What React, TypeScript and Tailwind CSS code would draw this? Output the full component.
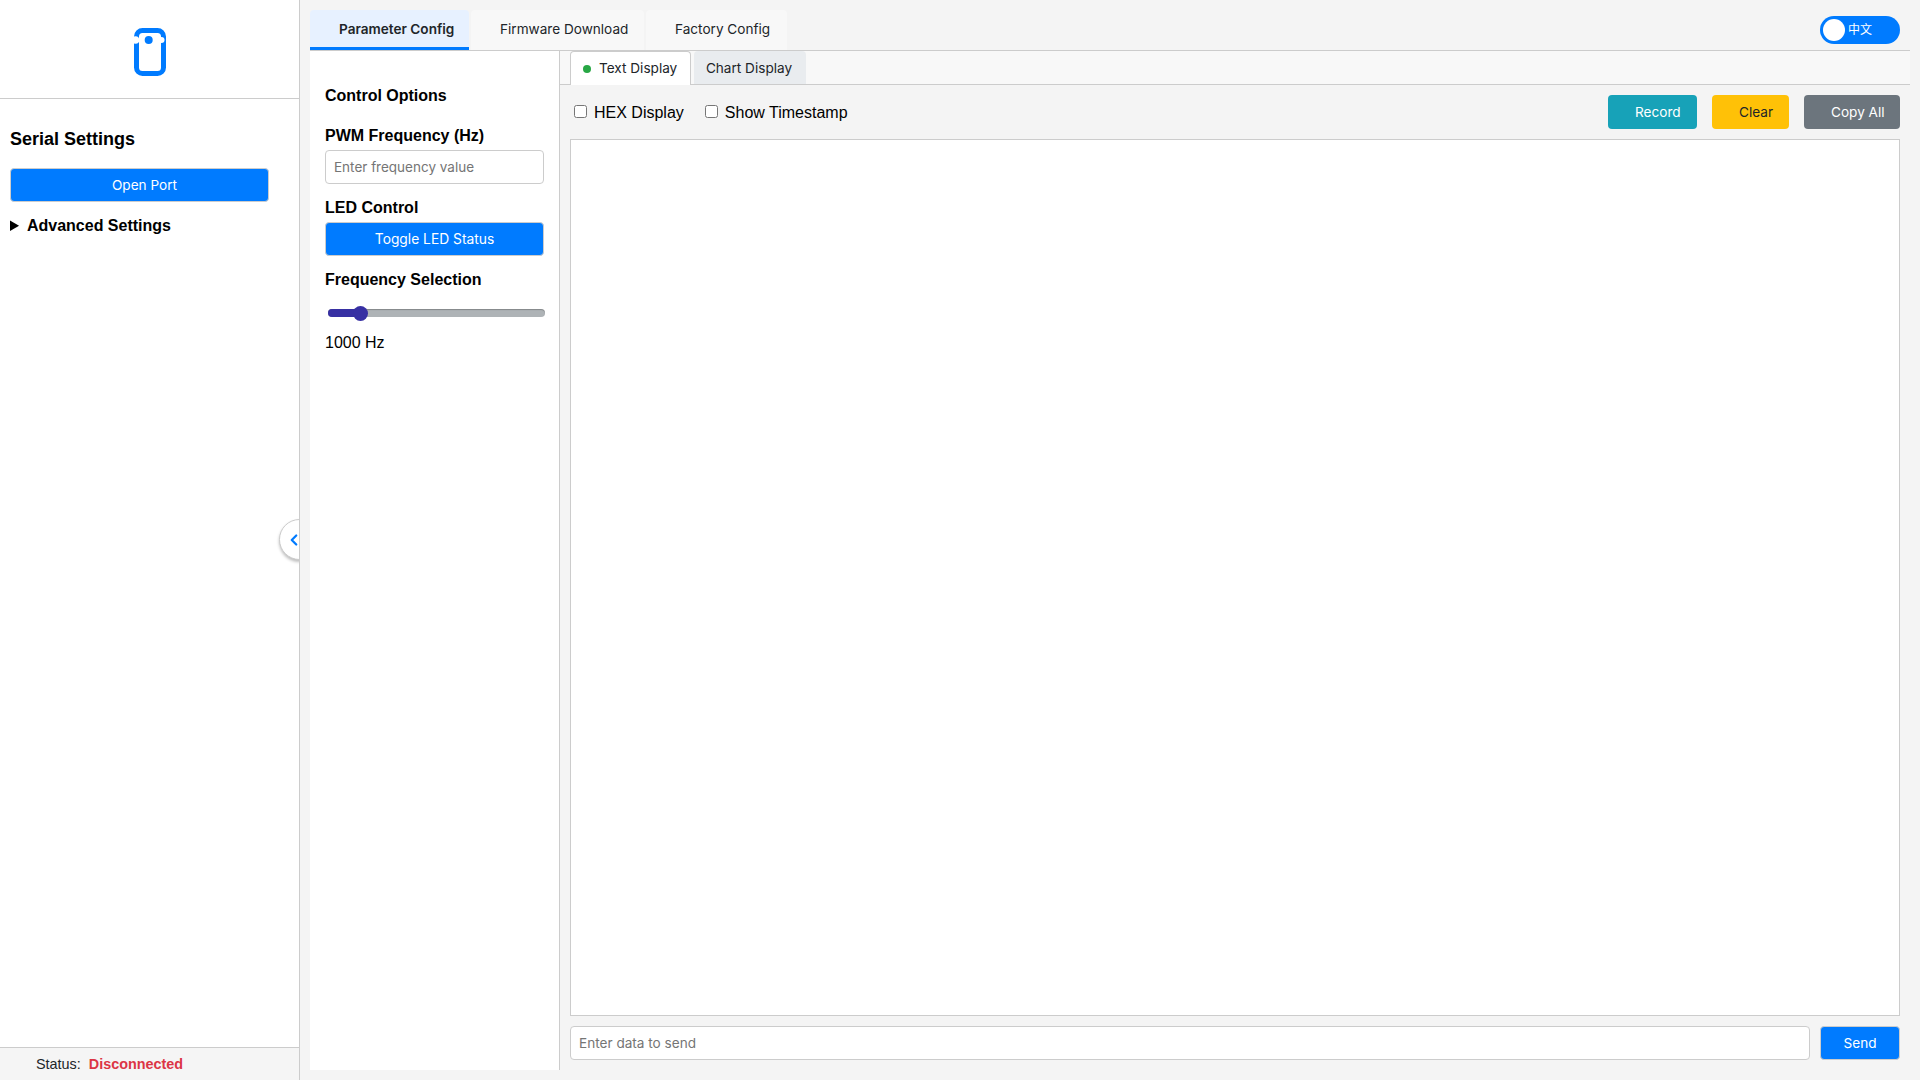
import { ChevronLeft } from "lucide-react";

const App = () => {
  return (
    <div className="flex h-[1080px] w-[1920px] overflow-hidden bg-[#f4f4f4] font-['Inter',sans-serif] text-[#212529]">
      <aside className="relative flex w-[300px] shrink-0 flex-col overflow-hidden border-r border-[#ccc] bg-white">
        <div className="flex h-[99px] items-center justify-center border-b border-[#ccc] pt-[6px]">
          <svg width="40" height="48" viewBox="-4 0 40 48" fill="none">
            <rect x="2.5" y="2.5" width="27" height="43" rx="6" stroke="#007bff" strokeWidth="5" />
            <circle cx="14.7" cy="12" r="4" fill="#007bff" />
            <circle cx="1.5" cy="12" r="3.8" fill="#fff" />
            <circle cx="27.5" cy="12" r="3" fill="#fff" />
          </svg>
        </div>
        <div className="flex-1 px-[10px] pt-[29px]">
          <h2 className="font-['Liberation_Sans',sans-serif] text-[18px] font-bold leading-[22px] text-black">Serial Settings</h2>
          <button className="mt-[18px] h-[34px] w-[259px] rounded-[4px] border border-[#ccc] bg-[#007bff] pl-[10px] text-[13.6px] text-white">Open Port</button>
          <details className="mt-[15px] font-['Liberation_Sans',sans-serif] text-[16px] font-bold leading-[18px] text-black">
            <summary>Advanced Settings</summary>
          </details>
        </div>
        <div className="flex h-[33px] items-center gap-2 border-t border-[#ccc] bg-[#f5f5f5] pl-9 pt-[2px] font-['Liberation_Sans',sans-serif] text-[14.4px]">
          Status: <span className="font-bold text-[#dc3545]">Disconnected</span>
        </div>
        <div className="absolute left-[279px] top-[519px] flex h-[41px] w-[41px] items-center rounded-full border border-[#ccc] bg-white pl-[5px] shadow-[0_2px_3px_rgba(0,0,0,0.25)]">
          <ChevronLeft size={18} strokeWidth={3} className="shrink-0 text-[#007bff]" />
        </div>
      </aside>
      <main className="flex min-w-0 flex-1 flex-col pb-[10px] pl-[10px] pr-[10px] pt-[10px]">
        <div className="flex h-[41px] items-start justify-between border-b border-[#ccc]">
          <div className="flex gap-[2px] text-[13.6px]">
            <div className="flex h-[40px] w-[159px] items-center rounded-t-[4px] border-b-[3px] border-[#007bff] bg-[#e7f1ff] pl-[29px] pt-[2px] font-semibold">Parameter Config</div>
            <div className="flex h-[40px] w-[173px] items-center rounded-t-[4px] border-b-[3px] border-transparent bg-[#f8f8f8] pl-[29px] pt-[2px]">Firmware Download</div>
            <div className="flex h-[40px] w-[141px] items-center rounded-t-[4px] border-b-[3px] border-transparent bg-[#f8f8f8] pl-[29px] pt-[2px]">Factory Config</div>
          </div>
          <div className="relative mr-[10px] mt-[6px] flex h-[28px] w-[80px] items-center rounded-full bg-[#007bff] pl-[28px] font-['Inter','Noto_Sans_CJK_SC',sans-serif] text-[12px] text-white">
            <span className="absolute left-[3px] h-[22px] w-[22px] rounded-full bg-white" />
            中文
          </div>
        </div>
        <div className="flex min-h-0 flex-1">
          <section className="w-[250px] shrink-0 border-r border-[#ccc] bg-white px-[15px] pt-[36px] font-['Liberation_Sans',sans-serif] text-black">
            <h3 className="text-[16px] font-bold leading-[18px]">Control Options</h3>
            <label className="mt-[22px] block text-[16px] font-bold leading-[18px]">PWM Frequency (Hz)</label>
            <input className="mt-[5px] h-[34px] w-[219px] rounded-[4px] border border-[#ccc] px-2 font-['Inter',sans-serif] text-[13.5px] placeholder:text-[#757575]" placeholder="Enter frequency value" />
            <div className="mt-[15px] text-[16px] font-bold leading-[18px]">LED Control</div>
            <button className="mt-[5px] h-[34px] w-[219px] rounded-[4px] border border-[#ccc] bg-[#007bff] font-['Inter',sans-serif] text-[13.8px] text-white">Toggle LED Status</button>
            <div className="mt-[15px] text-[16px] font-bold leading-[18px]">Frequency Selection</div>
            <div className="ml-[3px] mt-[20px] flex h-[8px] w-[217px] items-center rounded-full bg-[#aeb3b6] shadow-[inset_0_1px_1px_rgba(0,0,0,0.25)]">
              <div className="h-[8px] w-[32px] rounded-full bg-[#3730a3]" />
              <div className="-ml-[7px] h-[15px] w-[15px] rounded-full bg-[#3730a3]" />
            </div>
            <div className="mt-[17px] text-[16px] leading-[18px]">1000 Hz</div>
          </section>
          <section className="flex min-w-0 flex-1 flex-col">
            <div className="flex h-[34px] items-end gap-[3px] border-b border-[#ccc] bg-[#f8f8f8] pl-[10px] text-[13.6px]">
              <div className="-mb-px flex h-[34px] w-[121px] items-center gap-2 rounded-t-[4px] border border-b-0 border-[#ccc] bg-white pl-[12px]">
                <span className="h-2 w-2 rounded-full bg-[#28a745]" />
                Text Display
              </div>
              <div className="flex h-[33px] w-[112px] items-center justify-center rounded-t-[4px] bg-[#e9ecef] pr-[2px] pt-[2px]">Chart Display</div>
            </div>
            <div className="flex min-h-0 flex-1 flex-col pb-[10px] pl-[10px] pr-[10px]">
              <div className="flex h-[54px] items-center justify-between font-['Liberation_Sans',sans-serif] text-[16px] text-black">
                <div className="flex items-center pl-1">
                  <input type="checkbox" className="mr-[7px] -mt-px h-[13px] w-[13px]" />
                  <span className="pt-px">HEX Display</span>
                  <input type="checkbox" className="ml-[21px] mr-[7px] -mt-px h-[13px] w-[13px]" />
                  <span className="pt-px">Show Timestamp</span>
                </div>
                <div className="flex gap-[15px] font-['Inter',sans-serif] text-[13.6px]">
                  <button className="h-[34px] w-[89px] rounded-[4px] bg-[#17a2b8] pl-[27px] text-left text-white">Record</button>
                  <button className="h-[34px] w-[77px] rounded-[4px] bg-[#ffc107] pl-[27px] text-left text-[#212529]">Clear</button>
                  <button className="h-[34px] w-[96px] rounded-[4px] bg-[#6c757d] pl-[27px] text-left text-white">Copy All</button>
                </div>
              </div>
              <div className="min-h-0 flex-1 border border-[#ccc] bg-white" />
              <div className="mt-[10px] flex gap-[10px]">
                <input className="h-[34px] min-w-0 flex-1 rounded-[4px] border border-[#ccc] bg-white px-2 text-[13.6px] placeholder:text-[#757575]" placeholder="Enter data to send" />
                <button className="h-[34px] w-[80px] rounded-[4px] border border-[#ccc] bg-[#007bff] text-[13.6px] text-white">Send</button>
              </div>
            </div>
          </section>
        </div>
      </main>
    </div>
  );
};

export default App;
